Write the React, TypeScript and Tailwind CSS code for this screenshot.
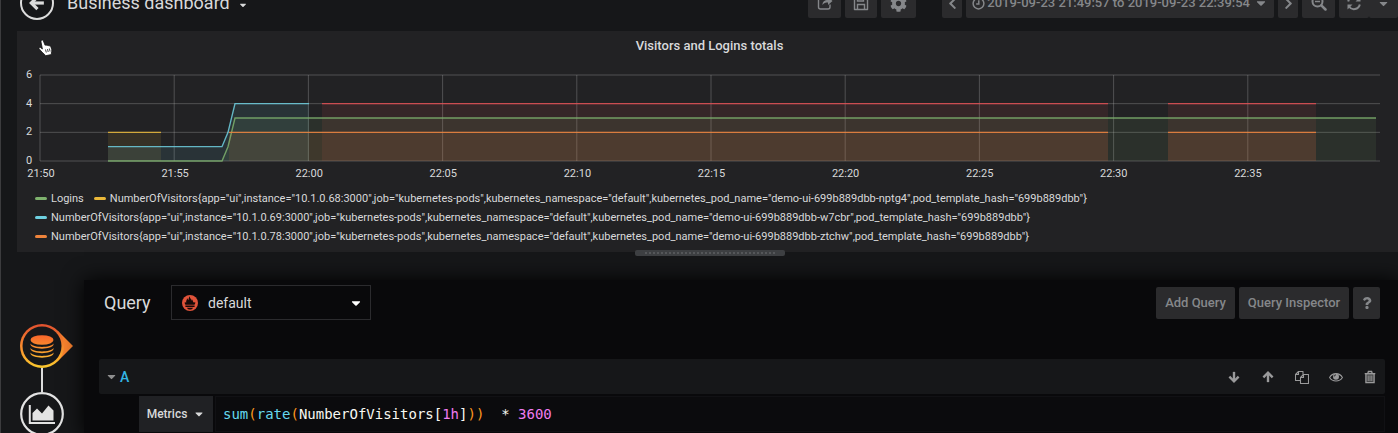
import React, { useState } from 'react';
import { FaCaretDown, FaChevronLeft, FaChevronRight, FaCog, FaQuestion } from 'react-icons/fa';

type Point = [number, number];

interface Series {
  color: string;
  points: Point[];
}

const PLOT_WIDTH = 1340;
const PLOT_HEIGHT = 86;
const Y_MAX = 6;

// x is the offset inside the plot, y is the metric value
const SERIES: Series[] = [
  { color: '#eab839', points: [[68, 2], [121, 2]] },
  { color: '#6ed0e0', points: [[68, 1], [182, 1], [188, 2], [195, 4], [269, 4]] },
  { color: '#e24d52', points: [[282, 4], [1068, 4]] },
  { color: '#e24d52', points: [[1128, 4], [1276, 4]] },
  { color: '#7eb26d', points: [[68, 0], [182, 0], [188, 1], [195, 3], [1336, 3]] },
  { color: '#ef843c', points: [[189, 2], [1068, 2]] },
  { color: '#ef843c', points: [[1128, 2], [1276, 2]] },
];

const TIMES = ['21:50', '21:55', '22:00', '22:05', '22:10', '22:15', '22:20', '22:25', '22:30', '22:35'];

const visitors = (instance: string, pod: string) =>
  `NumberOfVisitors{app="ui",instance="${instance}",job="kubernetes-pods",kubernetes_namespace="default",kubernetes_pod_name="demo-ui-699b889dbb-${pod}",pod_template_hash="699b889dbb"}`;

const LEGEND = [
  { label: 'Logins', swatch: 'bg-[#7eb26d]' },
  { label: visitors('10.1.0.68:3000', 'nptg4'), swatch: 'bg-[#eab839]' },
  { label: visitors('10.1.0.69:3000', 'w7cbr'), swatch: 'bg-[#6ed0e0]' },
  { label: visitors('10.1.0.78:3000', 'ztchw'), swatch: 'bg-[#ef843c]' },
];

const toY = (value: number) => PLOT_HEIGHT - (value / Y_MAX) * PLOT_HEIGHT;

const Chart: React.FC = () => (
  <svg
    viewBox={`0 0 ${PLOT_WIDTH} ${PLOT_HEIGHT}`}
    preserveAspectRatio="none"
    className="block w-full h-[86px] overflow-visible"
    fill="none"
    aria-hidden="true"
  >
    <g stroke="#c8c8c8" strokeOpacity="0.28">
      {[0, 2, 4, 6].map((v) => (
        <line key={v} x1="0" x2={PLOT_WIDTH} y1={toY(v)} y2={toY(v)} vectorEffect="non-scaling-stroke" />
      ))}
      {TIMES.map((time, i) => (
        <line key={time} x1={i * 134.2} x2={i * 134.2} y1="0" y2={PLOT_HEIGHT} vectorEffect="non-scaling-stroke" />
      ))}
    </g>
    {SERIES.map(({ color, points }, i) => {
      const line = points.map(([x, v]) => `${x},${toY(v)}`).join(' ');
      const first = points[0][0];
      const last = points[points.length - 1][0];
      return (
        <g key={i}>
          <polygon
            points={`${first},${PLOT_HEIGHT} ${line} ${last},${PLOT_HEIGHT}`}
            fill={color}
            fillOpacity="0.1"
          />
          <polyline points={line} stroke={color} strokeWidth="1.4" strokeOpacity="0.85" vectorEffect="non-scaling-stroke" />
        </g>
      );
    })}
  </svg>
);

interface ArrowProps {
  className: string;
}

const ArrowIcon: React.FC<ArrowProps> = ({ className }) => (
  <svg viewBox="0 0 14 14" className={className} fill="none" stroke="currentColor" strokeWidth="2.800">
    <path d="M7 1v10.500" />
    <path d="M1.600 6.600L7 12l5.400-5.400" />
  </svg>
);

const ShareIcon = () => (
  <svg viewBox="0 0 16 16" className="size-4" fill="none" stroke="currentColor" strokeWidth="1.400">
    <path d="M7 2.500H3.500A2 2 0 0 0 1.500 4.500v7.500a2 2 0 0 0 2 2H11a2 2 0 0 0 2-2V9.500" />
    <path d="M5.500 10C5.500 6.500 7.500 5 11 5V2l4.500 4L11 10V7.500C8.500 7.500 6.800 8 5.500 10z" fill="currentColor" stroke="none" />
  </svg>
);

const SaveIcon = () => (
  <svg viewBox="0 0 16 16" className="size-4" fill="none" stroke="currentColor" strokeWidth="1.400">
    <path d="M1.500 1.500H11l3.500 3.500v9.500h-13z" strokeLinejoin="round" />
    <path d="M4.500 1.500v4.500h6V1.500M4.500 14.500V9.500h7v5" />
  </svg>
);

const ClockIcon = () => (
  <svg viewBox="0 0 14 14" className="size-[13px]" fill="none" stroke="currentColor" strokeWidth="1.600">
    <circle cx="7" cy="7" r="5.800" />
    <path d="M7.300 3.500v4H4.500" />
  </svg>
);

const ZoomOutIcon = () => (
  <svg viewBox="0 0 16 16" className="size-4" fill="none" stroke="currentColor" strokeWidth="2">
    <circle cx="6.500" cy="6.500" r="5" />
    <path d="M4 6.500h5" strokeWidth="1.500" />
    <path d="M10.300 10.300l4.200 4.200" strokeWidth="2.500" strokeLinecap="round" />
  </svg>
);

const RefreshIcon = () => (
  <svg viewBox="0 0 16 16" className="size-4" fill="none" stroke="currentColor" strokeWidth="2">
    <path d="M2.200 6.500A6 6 0 0 1 13 4.500M13.800 9.500A6 6 0 0 1 3 11.500" />
    <path d="M14.500 1.500v5h-5zM1.500 14.500v-5h5z" fill="currentColor" stroke="none" />
  </svg>
);

const CopyIcon = () => (
  <svg viewBox="0 0 14 14" className="size-[14px]" fill="none" stroke="currentColor" strokeWidth="1.100" strokeLinejoin="round">
    <path d="M5.500 10.500h-5v-6l3-3h4.500v3M3.500 1.500v3h-3" />
    <path d="M8.500 4.500h5v9h-8V7.500zM8.500 4.500v3h-3" />
  </svg>
);

const EyeIcon = () => (
  <svg viewBox="0 0 14 14" className="size-[14px]" fill="none" stroke="currentColor" strokeWidth="1.100">
    <path d="M.6 7.500C3.500 2.300 10.500 2.300 13.400 7.500 10.500 12.200 3.500 12.200.6 7.500z" />
    <circle cx="7" cy="6.800" r="3" fill="currentColor" stroke="none" />
    <path d="M5.300 6.500A1.700 1.700 0 0 1 7 4.800" stroke="#161719" strokeWidth=".8" />
  </svg>
);

const TrashIcon = () => (
  <svg viewBox="0 0 14 14" className="size-[14px]" fill="none" stroke="currentColor" strokeWidth="1.300">
    <path d="M1.700 3.600h10.600M4.800 3.500l.6-2h3.200l.6 2" />
    <path d="M2.900 3.600v9h8.200v-9z" fill="currentColor" fillOpacity=".35" />
    <path d="M5.200 5.500v5.500M7 5.500v5.500M8.800 5.500v5.500" strokeWidth=".9" />
  </svg>
);

const PrometheusIcon = () => (
  <svg viewBox="0 0 16 16" className="size-4" aria-hidden="true">
    <circle cx="8" cy="8" r="8" fill="#e0533a" />
    <path
      d="M3.400 9.800C2.800 8.900 2.600 8 2.700 7.200l1.600.4C3.700 5.400 5.200 5 5 3.200c.8.5 1.100 1.200 1.200 2C6.900 4.300 6.600 2.400 7.700 1.200c-.2 1.900 1.800 2.500 1.600 4.600.4-.5.5-1.100.5-1.800 1.100 1.200.9 2.500 1.900 3.600l1.600-.4c.1.900-.2 1.800-.8 2.600zM3.400 10.600h9.200V12H3.400zM5 12.700h6c-.3 1.100-1.400 1.800-3 1.800s-2.700-.7-3-1.800z"
      fill="#160a09"
    />
  </svg>
);

const QueriesTabIcon = () => (
  <svg viewBox="0 0 54 44" className="block w-[54px] h-[44px]" aria-hidden="true">
    <defs>
      <linearGradient id="tab-ring" x1="0" y1="0" x2="0" y2="1">
        <stop offset="0" stopColor="#e0502f" />
        <stop offset="0.5" stopColor="#f98a2e" />
        <stop offset="1" stopColor="#fbca2e" />
      </linearGradient>
      <linearGradient id="tab-disks" gradientUnits="userSpaceOnUse" x1="0" y1="11" x2="0" y2="33">
        <stop offset="0" stopColor="#f7652b" />
        <stop offset="1" stopColor="#fbb030" />
      </linearGradient>
    </defs>
    <path d="M38 7L53 22 38 37z" fill="#f9822e" />
    <circle cx="22" cy="22" r="22" fill="url(#tab-ring)" />
    <circle cx="22" cy="22" r="19.500" fill="#161719" />
    <g fill="url(#tab-disks)">
      <ellipse cx="22" cy="16" rx="11.500" ry="4.800" />
      <path d="M10.500 19.500c2 4.500 21 4.500 23 0v1c-1 5.500-22 5.500-23 0zM10.500 24c2 4.500 21 4.500 23 0v1c-1 5.500-22 5.500-23 0zM10.500 28.500c2 4.500 21 4.500 23 0v1c-1 5.500-22 5.500-23 0z" />
    </g>
  </svg>
);

const GraphTabIcon = () => (
  <svg viewBox="0 0 44 44" className="block size-[44px]" aria-hidden="true">
    <circle cx="22" cy="22" r="20.800" fill="#161719" stroke="#e3e3e3" strokeWidth="2.200" />
    <path d="M9.800 13v18H35" fill="none" stroke="#e3e3e3" strokeWidth="2" />
    <path d="M12.500 28.500V21l4.500-4.500 5 5 6.500-8 5 5v10z" fill="#e3e3e3" />
  </svg>
);

const PointerCursor = () => (
  <svg viewBox="0 0 16 18" className="absolute left-[37px] top-[39px] w-4 h-[18px]" aria-hidden="true">
    <path
      d="M3.600 1.200c.8-.5 1.500 0 1.800.8l1.700 4.300c.7-.5 1.500-.3 1.900.3.700-.5 1.500-.2 1.900.4.800-.4 1.700 0 2 .9l.8 2.500c.3 1.300 0 2.400-.4 3.600l.2 1.500-6.200 1.300-.6-1.200C4.900 14.200 2.900 12 1.200 9.900c-.7-1 .6-2 1.700-1.100l1.500 1.200L3 3c-.2-.8 0-1.400.6-1.800z"
      fill="#fff"
      stroke="#111"
      strokeWidth=".8"
    />
    <path d="M7.500 10.500l.8 3M9.500 10l.7 3M11.400 9.500l.7 3" stroke="#111" strokeWidth=".8" />
  </svg>
);

interface NavButtonProps {
  label: string;
  width: string;
  children: React.ReactNode;
}

const NavButton: React.FC<NavButtonProps> = ({ label, width, children }) => (
  <button
    type="button"
    aria-label={label}
    className={`${width} h-[30px] flex items-center justify-center rounded-xs bg-[#2b2b2d] text-[#85878a]`}
  >
    {children}
  </button>
);

const Header: React.FC = () => (
  <header className="flex items-end justify-between h-[31px] pl-5 overflow-hidden">
    <div className="flex items-center gap-3 mb-[11px]">
      <button
        type="button"
        aria-label="Go back"
        className="size-[34px] flex items-center justify-center rounded-full border-2 border-[#dcdcdc] text-[#dcdcdc]"
      >
        <ArrowIcon className="size-4 rotate-90" />
      </button>
      <button type="button" className="flex items-center gap-2 pl-px text-lg leading-6 text-[#d8d9da]">
        Business dashboard
        <FaCaretDown size={10} className="mt-1" />
      </button>
    </div>
    <div className="flex gap-1 mb-[13px] shrink-0">
      <NavButton label="Share dashboard" width="w-[33px]"><ShareIcon /></NavButton>
      <NavButton label="Save dashboard" width="w-[32px]"><SaveIcon /></NavButton>
      <NavButton label="Dashboard settings" width="w-[35px]"><FaCog size={17} /></NavButton>
      <div className="flex gap-1 ml-[22px]">
        <NavButton label="Shift time back" width="w-5"><FaChevronLeft size={13} /></NavButton>
        <button
          type="button"
          className="h-[30px] flex items-center gap-[2px] px-[6px] rounded-xs bg-[#2b2b2d] text-[13px] font-medium text-[#85878a] whitespace-nowrap"
        >
          <ClockIcon />
          2019-09-23 21:49:57 to 2019-09-23 22:39:54
          <FaCaretDown size={14} className="ml-[2px]" />
        </button>
        <NavButton label="Shift time forward" width="w-5"><FaChevronRight size={13} /></NavButton>
        <NavButton label="Zoom out" width="w-[33px]"><ZoomOutIcon /></NavButton>
        <NavButton label="Refresh" width="w-[30px]"><RefreshIcon /></NavButton>
        <div className="-ml-1">
          <NavButton label="Refresh interval" width="w-[29px]"><FaCaretDown size={13} /></NavButton>
        </div>
      </div>
    </div>
  </header>
);

const GraphPanel: React.FC = () => (
  <section className="ml-[17px] h-[221px] bg-[#222224]">
    <h2 className="pt-[5px] pl-1 text-center text-[13px] leading-5 font-medium text-[#d8d9da]">
      Visitors and Logins totals
    </h2>
    <div className="flex pl-[9px] pr-[18px] pt-[19px] text-[11px] leading-4 text-[#d8d9da]">
      <div className="flex flex-col justify-between w-[14px] -my-2">
        {[6, 4, 2, 0].map((v) => (
          <span key={v}>{v}</span>
        ))}
      </div>
      <div className="flex-1">
        <Chart />
      </div>
    </div>
    <div className="grid grid-cols-10 pl-6 pr-4 pt-[5px] text-[11px] leading-4 text-[#d8d9da]">
      {TIMES.map((time) => (
        <span key={time} className="justify-self-start -translate-x-1/2">{time}</span>
      ))}
    </div>
    <ul className="flex flex-wrap gap-x-[10px] pl-[18px] pr-48 pt-[7px] text-[11px] leading-[19px] text-[#d8d9da]">
      {LEGEND.map(({ label, swatch }) => (
        <li key={label} className="flex items-center gap-1 whitespace-nowrap">
          <span className={`w-3 h-[3px] rounded-xs ${swatch}`} />
          {label}
        </li>
      ))}
    </ul>
  </section>
);

const ACTIONS = [
  { label: 'Move query down', icon: <ArrowIcon className="size-3" /> },
  { label: 'Move query up', icon: <ArrowIcon className="size-3 rotate-180" /> },
  { label: 'Duplicate query', icon: <CopyIcon /> },
  { label: 'Toggle query', icon: <EyeIcon /> },
  { label: 'Remove query', icon: <TrashIcon /> },
];

const toolButton =
  'h-8 flex items-center justify-center rounded-xs bg-[#2b2b2d] text-[13px] font-medium text-[#85878a]';

const QueryEditor: React.FC = () => {
  const [open, setOpen] = useState(true);

  return (
    <section className="flex-1 min-w-0 mt-1 bg-[#09090b] shadow-[0_0_20px_#000]">
      <div className="flex items-center justify-between pl-5 pr-[18px] pt-[5px]">
        <div className="flex items-center">
          <label htmlFor="datasource" className="w-[67px] text-lg text-[#d8d9da]">Query</label>
          <div className="grid items-center w-[200px] h-[35px] border border-[#2b2b2e]">
            <select
              id="datasource"
              className="col-start-1 row-start-1 appearance-none h-full pl-9 bg-transparent text-sm text-[#d8d9da]"
            >
              <option>default</option>
            </select>
            <span className="col-start-1 row-start-1 flex items-center justify-between pl-[10px] pr-[7px] pointer-events-none">
              <PrometheusIcon />
              <FaCaretDown size={14} className="text-white" />
            </span>
          </div>
        </div>
        <div className="flex gap-1">
          <button type="button" className={`${toolButton} w-[79px]`}>Add Query</button>
          <button type="button" className={`${toolButton} w-[110px]`}>Query Inspector</button>
          <button type="button" aria-label="Help" className={`${toolButton} w-[27px]`}>
            <FaQuestion size={12} />
          </button>
        </div>
      </div>

      <div className="mt-[39px] ml-[15px] mr-[13px]">
        <div className="flex items-center justify-between h-[35px] pl-[6px] pr-2 rounded-xs bg-[#161719]">
          <button
            type="button"
            onClick={() => setOpen(!open)}
            className="flex items-center gap-[2px] text-sm font-medium text-[#33b5e5]"
          >
            <FaCaretDown size={13} className="text-[#8e8e8e]" />
            A
          </button>
          <div className="flex gap-5 text-[#9a9a9b]">
            {ACTIONS.map(({ label, icon }) => (
              <button key={label} type="button" aria-label={label} className="w-[14px] flex justify-center items-center">
                {icon}
              </button>
            ))}
          </div>
        </div>
        {open && (
          <div className="flex gap-[2px] mt-[2px] pl-10">
            <button
              type="button"
              className="w-[74px] h-9 flex items-center justify-center gap-[6px] bg-[#202124] text-xs font-medium text-[#d8d9da]"
            >
              Metrics
              <FaCaretDown size={12} />
            </button>
            <div
              role="textbox"
              aria-label="Metrics query"
              contentEditable
              suppressContentEditableWarning
              spellCheck={false}
              className="flex-1 h-9 pl-[7px] border border-[#111114] bg-[#0b0b0d] font-['DejaVu_Sans_Mono',monospace] text-sm leading-[34px] text-[#f8f8f2] whitespace-pre"
            >
              <span className="text-[#66d9ef]">sum</span>
              <span className="text-[#fd971f]">(</span>
              <span className="text-[#66d9ef]">rate</span>
              <span className="text-[#fd971f]">(</span>
              NumberOfVisitors[
              <span className="text-[#f07cf0]">1h</span>
              ]
              <span className="text-[#fd971f]">))</span>
              {'  * '}
              <span className="text-[#f07cf0]">3600</span>
            </div>
          </div>
        )}
      </div>
    </section>
  );
};

export default function App() {
  return (
    <div className="relative flex flex-col h-screen overflow-hidden border-l border-[#3c3c3e] bg-[#161719] font-[Roboto,sans-serif]">
      <div className="-ml-px flex flex-col flex-1">
        <Header />
        <GraphPanel />
        <div className="h-6 flex justify-center items-start">
          <div className="-mt-[2px] ml-[22px] w-[150px] h-[6px] flex items-center px-[10px] rounded-xs bg-[#3e4043]">
            <span className="w-full border-t-2 border-dotted border-[#56585b]" />
          </div>
        </div>
        <main className="flex flex-1">
          <nav className="w-[84px] pl-5 pt-12">
            <button type="button" aria-label="Queries" className="block"><QueriesTabIcon /></button>
            <div className="w-[2px] h-6 ml-[21px] bg-[#dcdcdc]" />
            <button type="button" aria-label="Visualization" className="block"><GraphTabIcon /></button>
          </nav>
          <QueryEditor />
        </main>
      </div>
      <PointerCursor />
    </div>
  );
}
